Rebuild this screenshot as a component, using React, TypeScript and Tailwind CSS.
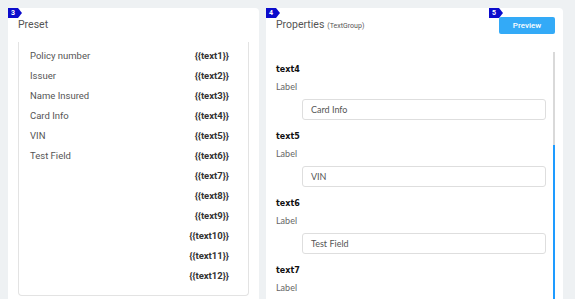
const presetRows: { label: string; key: string }[] = [
  { label: 'Policy number', key: 'text1' },
  { label: 'Issuer', key: 'text2' },
  { label: 'Name Insured', key: 'text3' },
  { label: 'Card Info', key: 'text4' },
  { label: 'VIN', key: 'text5' },
  { label: 'Test Field', key: 'text6' },
  { label: '', key: 'text7' },
  { label: '', key: 'text8' },
  { label: '', key: 'text9' },
  { label: '', key: 'text10' },
  { label: '', key: 'text11' },
  { label: '', key: 'text12' },
];

const fields: { name: string; value: string }[] = [
  { name: 'text4', value: 'Card Info' },
  { name: 'text5', value: 'VIN' },
  { name: 'text6', value: 'Test Field' },
  { name: 'text7', value: '' },
];

function StepBadge({ n }: { n: number }) {
  return (
    <div className="absolute left-0 top-0 flex h-[10px] items-center">
      <div className="flex h-[10px] w-[10px] items-center justify-center bg-[#0b0bcc] text-[7px] font-bold leading-none text-white">
        {n}
      </div>
      <div className="h-0 w-0 border-y-[5px] border-l-[4px] border-y-transparent border-l-[#0b0bcc]" />
    </div>
  );
}

export default function App() {
  return (
    <div className="flex h-[299px] w-[575px] gap-[7px] overflow-hidden bg-[#eef1f3] pl-[8px] pt-[8px] font-['Roboto',sans-serif]">
      {/* Preset */}
      <div className="relative h-[300px] w-[251px] shrink-0 rounded-[4px] bg-white">
        <StepBadge n={3} />
        <div className="px-[10px] pt-[10px] text-[10.5px] leading-[14px] text-[#555]">Preset</div>
        <div className="mx-[10px] mt-[10px] rounded-b-[4px] border-x border-b border-[#e3e3e3] pb-[9px] pl-[11px] pr-[19px] pt-[4px]">
          {presetRows.map((row) => (
            <div key={row.key} className="flex h-[20px] items-center justify-between text-[9.5px]">
              <span className="text-[#555]">{row.label}</span>
              <span className="font-bold text-[#333]">{`{{${row.key}}}`}</span>
            </div>
          ))}
        </div>
      </div>

      {/* Properties */}
      <div className="relative h-[300px] w-[297px] shrink-0 rounded-[4px] bg-white">
        <StepBadge n={4} />
        <div className="flex h-[44px] items-start justify-between pl-[10px] pr-[8px]">
          <div className="mt-[10px] flex h-[14px] items-baseline text-[10.5px] leading-[14px] text-[#555]">
            <span>Properties</span>
            <span className="ml-[3px] text-[7px]">(TextGroup)</span>
          </div>
          <div className="relative mt-[9px]">
            <div className="absolute -left-[10px] -top-[9px]">
              <div className="relative">
                <StepBadge n={5} />
              </div>
            </div>
            <button className="block h-[17px] w-[56px] rounded-[2px] bg-[#33aaf7] text-[8px] font-medium leading-[17px] text-white">
              Preview
            </button>
          </div>
        </div>

        <div className="flex pl-[10px] pr-[8px]">
          <div className="flex-1 pr-[7px] pt-[11px] font-['Lato',sans-serif]">
            {fields.map((f) => (
              <div key={f.name} className="pb-[10px]">
                <div className="font-['DejaVu_Sans',sans-serif] text-[8px] font-bold leading-[14px] text-[#111]">
                  {f.name}
                </div>
                <div className="mt-[3px] text-[9px] leading-[14px] text-[#666]">Label</div>
                <div className="ml-[26px] mt-[5px] flex h-[21px] items-center rounded-[3px] border border-[#dedede] px-[8px] text-[9px] text-[#555]">
                  {f.value}
                </div>
              </div>
            ))}
          </div>
          <div className="flex h-[260px] w-[2px] flex-col bg-[#d9d9d9]">
            <div className="h-[93px]" />
            <div className="flex-1 bg-[#1e9bff]" />
          </div>
        </div>
      </div>
    </div>
  );
}
